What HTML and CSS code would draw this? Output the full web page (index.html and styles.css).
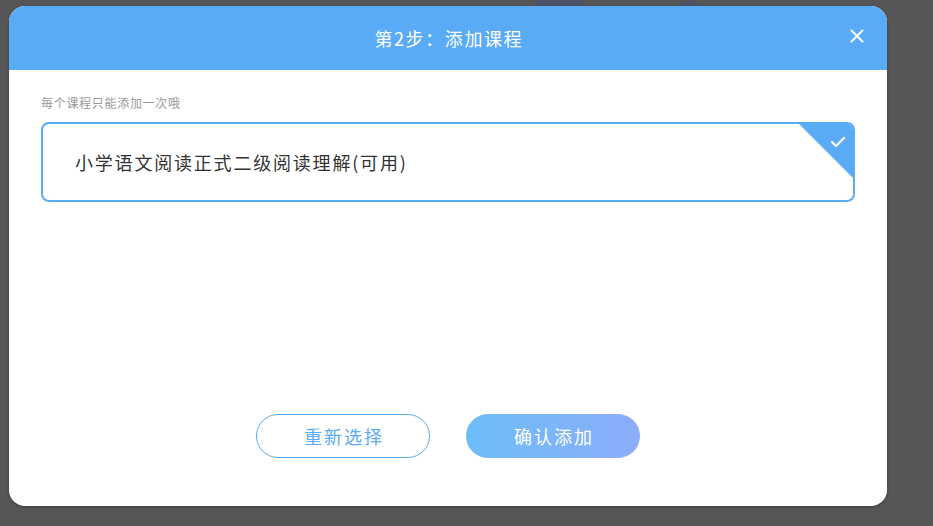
FILE: index.html
```html
<!DOCTYPE html>
<html lang="zh">
<head>
<meta charset="utf-8">
<link rel="stylesheet" href="styles.css">
</head>
<body>
<div class="backdrop">
  <div class="bg-shape bg-shape-a"></div>
  <div class="bg-shape bg-shape-b"></div>
</div>
<div class="dialog">
  <div class="dialog-header">
    <div class="dialog-title">第2步：添加课程</div>
    <svg class="close-icon" width="14" height="14" viewBox="0 0 14 14"><path d="M1.5 1.5 L12.5 12.5 M12.5 1.5 L1.5 12.5" stroke="#fff" stroke-width="2" fill="none" stroke-linecap="round"/></svg>
  </div>
  <div class="dialog-body">
    <div class="hint">每个课程只能添加一次哦</div>
    <div class="course-card">
      <span class="course-name">小学语文阅读正式二级阅读理解(可用)</span>
      <div class="corner-badge"></div>
      <svg class="check-icon" width="16" height="12" viewBox="0 0 16 12"><path d="M2 6 L6 10 L14 2" stroke="#fff" stroke-width="2.4" fill="none" stroke-linecap="round" stroke-linejoin="round"/></svg>
    </div>
    <div class="actions">
      <button class="btn btn-outline">重新选择</button>
      <button class="btn btn-primary">确认添加</button>
    </div>
  </div>
</div>
</body>
</html>
```
FILE: styles.css
```css
* { box-sizing: border-box; }
html, body {
  margin: 0;
  padding: 0;
}
body {
  width: 933px;
  height: 526px;
  background: #555655;
  font-family: "Noto Sans CJK SC", "Noto Sans", sans-serif;
  position: relative;
  overflow: hidden;
  padding: 6px 0 0 9px;
}
.backdrop {
  position: absolute;
  left: 0;
  top: 0;
  width: 933px;
  height: 10px;
}
.bg-shape {
  position: absolute;
  background: #4d5266;
}
.bg-shape-a {
  left: 535px;
  top: 0;
  width: 48px;
  height: 10px;
}
.bg-shape-b {
  left: 677px;
  top: 0;
  width: 26px;
  height: 20px;
  border-radius: 13px 13px 0 0;
}
.dialog {
  position: relative;
  width: 878px;
  height: 500px;
  background: #fff;
  border-radius: 16px;
  overflow: hidden;
  display: flex;
  flex-direction: column;
  box-shadow: 0 1px 3px rgba(0,0,0,0.3);
}
.dialog-header {
  height: 64px;
  background: #59abf6;
  display: flex;
  align-items: center;
  justify-content: center;
  position: relative;
  flex-shrink: 0;
}
.dialog-title {
  color: #fff;
  font-size: 18px;
  letter-spacing: 1.6px;
  margin-left: 1.6px;
}
.close-icon {
  position: absolute;
  right: 23px;
  top: 23px;
}
.dialog-body {
  flex: 1;
  display: flex;
  flex-direction: column;
  padding: 25px 32px 48px;
}
.hint {
  font-size: 12px;
  line-height: 16px;
  color: #999;
  letter-spacing: 0.7px;
}
.course-card {
  margin-top: 11px;
  height: 80px;
  border: 2px solid #5aabf5;
  border-radius: 8px;
  position: relative;
  overflow: hidden;
  display: flex;
  align-items: center;
  padding-left: 32px;
}
.course-name {
  font-size: 18px;
  color: #333;
  letter-spacing: 1.8px;
}
.corner-badge {
  position: absolute;
  right: 0;
  top: 0;
  width: 54px;
  height: 54px;
  background: #5aabf5;
  clip-path: polygon(0 0, 100% 0, 100% 100%);
}
.check-icon {
  position: absolute;
  right: 7px;
  top: 12px;
}
.actions {
  margin-top: auto;
  display: flex;
  justify-content: center;
  gap: 36px;
}
.btn {
  width: 174px;
  height: 44px;
  border-radius: 22px;
  font-family: "Noto Sans CJK SC", "Noto Sans", sans-serif;
  font-size: 18px;
  letter-spacing: 2px;
  text-indent: 2px;
  cursor: pointer;
  padding: 0;
}
.btn-outline {
  background: #fff;
  border: 1px solid #5aabf5;
  color: #5aabf5;
}
.btn-primary {
  border: none;
  color: #fff;
  background: linear-gradient(90deg, #6dbdf8 0%, #8badf9 100%);
}
```
